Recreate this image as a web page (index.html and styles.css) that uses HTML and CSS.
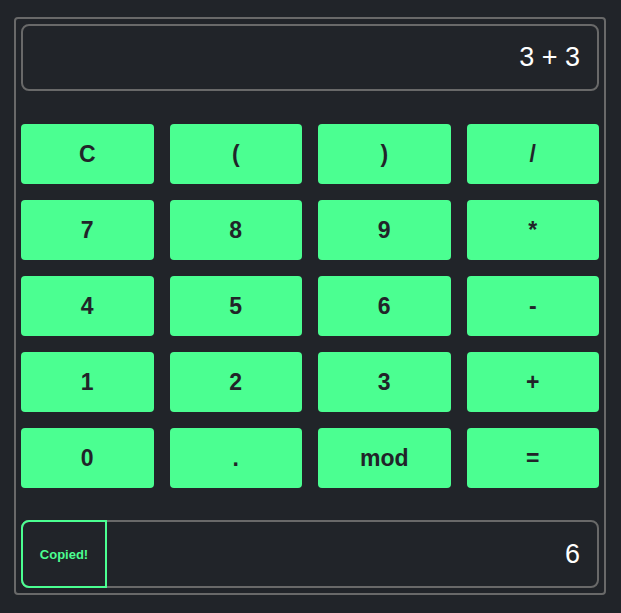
FILE: index.html
```html
<!DOCTYPE html>
<html>
<head>
<meta charset="utf-8">
<link rel="stylesheet" href="styles.css">
</head>
<body>
<div class="calc">
  <div class="display">3 + 3</div>
  <div class="keys">
    <button class="key">C</button>
    <button class="key">(</button>
    <button class="key">)</button>
    <button class="key">/</button>
    <button class="key">7</button>
    <button class="key">8</button>
    <button class="key">9</button>
    <button class="key">*</button>
    <button class="key">4</button>
    <button class="key">5</button>
    <button class="key">6</button>
    <button class="key">-</button>
    <button class="key">1</button>
    <button class="key">2</button>
    <button class="key">3</button>
    <button class="key">+</button>
    <button class="key">0</button>
    <button class="key">.</button>
    <button class="key">mod</button>
    <button class="key">=</button>
  </div>
  <div class="result">
    <div class="copied">Copied!</div>
    <div class="value">6</div>
  </div>
</div>
</body>
</html>
```
FILE: styles.css
```css
html, body {
  margin: 0;
  padding: 0;
  background: #212429;
  font-family: "Liberation Sans", Arial, sans-serif;
}
.calc {
  box-sizing: border-box;
  width: 592px;
  margin: 17px 0 0 14px;
  border: 2px solid #696969;
  border-radius: 4px;
  padding: 5px;
}
.display {
  box-sizing: border-box;
  height: 67px;
  border: 2px solid #696969;
  border-radius: 8px;
  display: flex;
  align-items: center;
  justify-content: flex-end;
  padding: 0 17px;
  color: #ffffff;
  font-size: 27px;
}
.keys {
  margin-top: 33px;
  display: grid;
  grid-template-columns: repeat(4, 1fr);
  grid-auto-rows: 60px;
  gap: 16px;
}
.key {
  border: none;
  border-radius: 4px;
  background: #4bff91;
  color: #212429;
  font-family: "Liberation Sans", Arial, sans-serif;
  font-weight: bold;
  font-size: 23px;
  padding: 0;
  margin: 0;
}
.result {
  margin-top: 32px;
  box-sizing: border-box;
  height: 68px;
  border: 2px solid #696969;
  border-radius: 8px;
  display: flex;
  align-items: center;
  position: relative;
}
.copied {
  position: absolute;
  left: -2px;
  top: -2px;
  bottom: -2px;
  width: 86px;
  box-sizing: border-box;
  border: 2px solid #4bff91;
  border-radius: 8px 0 0 8px;
  display: flex;
  align-items: center;
  justify-content: center;
  color: #4bff91;
  font-family: "Liberation Sans", Arial, sans-serif;
  font-weight: bold;
  font-size: 13px;
}
.value {
  margin-left: auto;
  padding-right: 17px;
  color: #ffffff;
  font-size: 27px;
}
```
